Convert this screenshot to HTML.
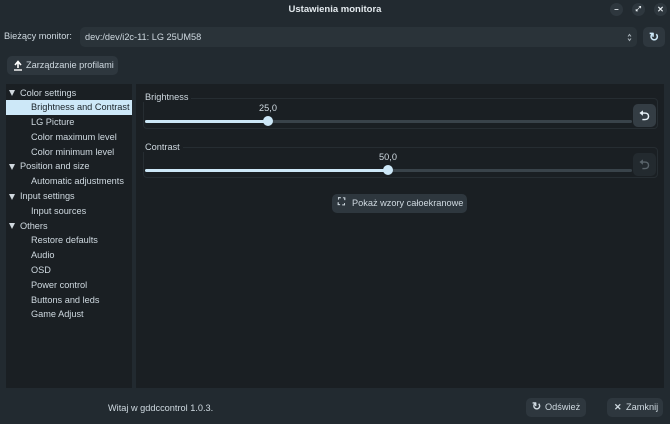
<!DOCTYPE html>
<html><head><meta charset="utf-8"><style>
*{margin:0;padding:0;box-sizing:border-box}
body{width:670px;height:424px;background:#222a30;font-family:"Liberation Sans",sans-serif;font-size:9.2px;color:#cfd9e0;position:relative;overflow:hidden}
.a{position:absolute;white-space:nowrap}
.title{left:0;top:0;width:670px;height:20px;text-align:center;line-height:19px;font-weight:bold;font-size:9.5px;color:#e4eaee}
.wb{top:3px;width:13px;height:13px;border-radius:50%;background:#2e373e;color:#e8eef2;font-size:8px;text-align:center;line-height:13px;font-weight:bold}
.btn{background:#2e373e;border-radius:5px;color:#cfd9e0;line-height:19px;height:19px}
.panel{background:#1a1f23}
.tree div{height:14.8px;line-height:14.8px;white-space:nowrap}
.tree .c{padding-left:14px;position:relative}
.tree .c:before{content:"";position:absolute;left:3px;top:4.5px;border-left:3.5px solid transparent;border-right:3.5px solid transparent;border-top:6px solid #d0d8de}
.tree .i{padding-left:25px}
.tree .sel{background:#cde8f8;color:#1a2228}
.frame{border:1px solid #262d32;border-radius:4px}
.track{height:3px;background:#39434a;border-radius:2px}
.fill{height:3px;background:#cde8f8;border-radius:2px}
.knob{width:10px;height:10px;border-radius:50%;background:#cde8f8}
</style></head><body>
<div class="a title">Ustawienia monitora</div>
<div class="a wb" style="left:610px">–</div>
<div class="a wb" style="left:632px;font-size:7px">⤢</div>
<div class="a wb" style="left:654px">✕</div>

<div class="a" style="left:4px;top:31px">Bieżący monitor:</div>
<div class="a btn" style="left:80px;top:27px;width:557px;height:20px;line-height:20px;padding-left:5px;background:#2a3339">dev:/dev/i2c-11: LG 25UM58<svg style="position:absolute;right:5px;top:6px" width="5" height="9"><path d="M1 3.5L2.5 1.5L4 3.5M1 5.5L2.5 7.5L4 5.5" stroke="#aab4bb" fill="none"/></svg></div>
<div class="a btn" style="left:643px;top:27px;width:22px;height:20px;text-align:center;line-height:20px;font-size:12px;font-weight:bold;color:#cde8f8">↻</div>

<div class="a btn" style="left:7px;top:56px;width:111px;padding-left:19px"><svg style="position:absolute;left:6px;top:4px" width="10" height="11"><path d="M5 8V2M2 5L5 1.5L8 5" stroke="#fff" stroke-width="1.6" fill="none"/><path d="M1 10H9" stroke="#fff" stroke-width="1.4"/></svg>Zarządzanie profilami</div>

<div class="a panel tree" style="left:6px;top:84px;width:126px;height:304px;padding-top:1.5px">
<div class="c">Color settings</div>
<div class="i sel">Brightness and Contrast</div>
<div class="i">LG Picture</div>
<div class="i">Color maximum level</div>
<div class="i">Color minimum level</div>
<div class="c">Position and size</div>
<div class="i">Automatic adjustments</div>
<div class="c">Input settings</div>
<div class="i">Input sources</div>
<div class="c">Others</div>
<div class="i">Restore defaults</div>
<div class="i">Audio</div>
<div class="i">OSD</div>
<div class="i">Power control</div>
<div class="i">Buttons and leds</div>
<div class="i">Game Adjust</div>
</div>

<div class="a panel" style="left:136px;top:84px;width:528px;height:304px"></div>

<div class="a frame" style="left:143px;top:98px;width:515px;height:31px"></div>
<div class="a" style="left:142px;top:92px;background:#1a1f23;padding:0 3px">Brightness</div>
<div class="a" style="left:248px;top:103px;width:40px;text-align:center">25,0</div>
<div class="a track" style="left:145px;top:120px;width:487px"></div>
<div class="a fill" style="left:145px;top:120px;width:123px"></div>
<div class="a knob" style="left:263px;top:116px"></div>
<div class="a btn" style="left:633px;top:104px;width:23px;height:23px;line-height:23px;text-align:center;font-size:13px;font-weight:bold;color:#e8f2f8;background:#343d44">⮌</div>

<div class="a frame" style="left:143px;top:147px;width:515px;height:31px"></div>
<div class="a" style="left:142px;top:142px;background:#1a1f23;padding:0 3px">Contrast</div>
<div class="a" style="left:368px;top:152px;width:40px;text-align:center">50,0</div>
<div class="a track" style="left:145px;top:169px;width:487px"></div>
<div class="a fill" style="left:145px;top:169px;width:243px"></div>
<div class="a knob" style="left:383px;top:165px"></div>
<div class="a btn" style="left:633px;top:153px;width:23px;height:23px;line-height:23px;text-align:center;font-size:13px;font-weight:bold;color:#5a646b;background:#232a2f">⮌</div>

<div class="a btn" style="left:332px;top:194px;width:135px;padding-left:20px"><span style="position:absolute;left:6px;top:-1px;font-size:10px;font-weight:bold">⛶</span>Pokaż wzory całoekranowe</div>

<div class="a" style="left:108px;top:403px">Witaj w gddccontrol 1.0.3.</div>
<div class="a btn" style="left:526px;top:398px;width:60px;padding-left:19px"><span style="position:absolute;left:6px;top:0;font-weight:bold;font-size:11px">↻</span>Odśwież</div>
<div class="a btn" style="left:607px;top:398px;width:56px;padding-left:19px"><span style="position:absolute;left:7px;top:0;font-weight:bold">✕</span>Zamknij</div>
</body></html>
